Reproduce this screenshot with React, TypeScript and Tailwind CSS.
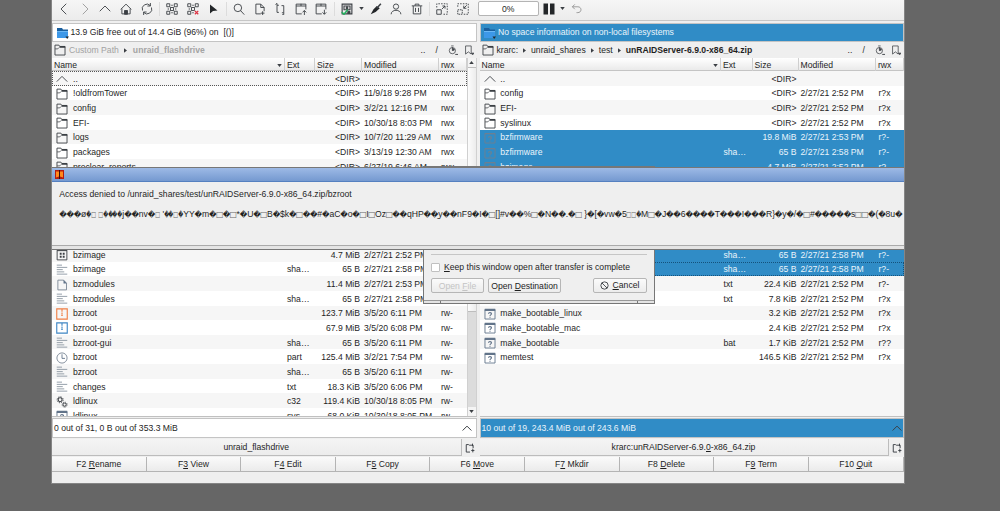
import React from "react"
import clsx from "clsx"

type Kind = "up" | "folder" | "unknown" | "exe" | "text" | "doc" | "zipOrange" | "zipBlue" | "clock" | "gears" | "none"

type Entry = {
  icon: Kind
  name: string
  ext?: string
  size?: string
  date?: string
  perm?: string
  selected?: boolean
  focused?: boolean
}

const blank: Entry = { icon: "none", name: "" }

const leftFiles: Entry[] = [
  { icon: "up", name: "..", size: "<DIR>", focused: true },
  { icon: "folder", name: "!oldfromTower", size: "<DIR>", date: "11/9/18 9:28 PM", perm: "rwx" },
  { icon: "folder", name: "config", size: "<DIR>", date: "3/2/21 12:16 PM", perm: "rwx" },
  { icon: "folder", name: "EFI-", size: "<DIR>", date: "10/30/18 8:03 PM", perm: "rwx" },
  { icon: "folder", name: "logs", size: "<DIR>", date: "10/7/20 11:29 AM", perm: "rwx" },
  { icon: "folder", name: "packages", size: "<DIR>", date: "3/13/19 12:30 AM", perm: "rwx" },
  { icon: "folder", name: "preclear_reports", size: "<DIR>", date: "6/27/19 6:46 AM", perm: "rwx" },
  blank,
  blank,
  blank,
  blank,
  blank,
  { icon: "exe", name: "bzimage", size: "4.7 MiB", date: "2/27/21 2:52 PM" },
  { icon: "text", name: "bzimage", ext: "sha…", size: "65 B", date: "2/27/21 2:58 PM" },
  { icon: "doc", name: "bzmodules", size: "11.4 MiB", date: "2/27/21 2:53 PM" },
  { icon: "text", name: "bzmodules", ext: "sha…", size: "65 B", date: "2/27/21 2:58 PM" },
  { icon: "zipOrange", name: "bzroot", size: "123.7 MiB", date: "3/5/20 6:11 PM", perm: "rw-" },
  { icon: "zipBlue", name: "bzroot-gui", size: "67.9 MiB", date: "3/5/20 6:08 PM", perm: "rw-" },
  { icon: "text", name: "bzroot-gui", ext: "sha…", size: "65 B", date: "3/5/20 6:11 PM", perm: "rw-" },
  { icon: "clock", name: "bzroot", ext: "part", size: "125.4 MiB", date: "3/2/21 7:54 PM", perm: "rw-" },
  { icon: "text", name: "bzroot", ext: "sha…", size: "65 B", date: "3/5/20 6:11 PM", perm: "rw-" },
  { icon: "text", name: "changes", ext: "txt", size: "18.3 KiB", date: "3/5/20 6:06 PM", perm: "rw-" },
  { icon: "gears", name: "ldlinux", ext: "c32", size: "119.4 KiB", date: "10/30/18 8:05 PM", perm: "rw-" },
  { icon: "unknown", name: "ldlinux", ext: "sys", size: "68.0 KiB", date: "10/30/18 8:05 PM", perm: "rw-" },
]

const rightFiles: Entry[] = [
  { icon: "up", name: "..", size: "<DIR>" },
  { icon: "folder", name: "config", size: "<DIR>", date: "2/27/21 2:52 PM", perm: "r?x" },
  { icon: "folder", name: "EFI-", size: "<DIR>", date: "2/27/21 2:52 PM", perm: "r?x" },
  { icon: "folder", name: "syslinux", size: "<DIR>", date: "2/27/21 2:52 PM", perm: "r?x" },
  { icon: "unknown", name: "bzfirmware", size: "19.8 MiB", date: "2/27/21 2:53 PM", perm: "r?-", selected: true },
  { icon: "unknown", name: "bzfirmware", ext: "sha…", size: "65 B", date: "2/27/21 2:58 PM", perm: "r?-", selected: true },
  { icon: "unknown", name: "bzimage", size: "4.7 MiB", date: "2/27/21 2:52 PM", perm: "r?-", selected: true },
  blank,
  blank,
  blank,
  blank,
  blank,
  { icon: "none", name: "", ext: "sha…", size: "65 B", date: "2/27/21 2:58 PM", perm: "r?-", selected: true },
  { icon: "none", name: "", ext: "sha…", size: "65 B", date: "2/27/21 2:58 PM", perm: "r?-", selected: true, focused: true },
  { icon: "none", name: "", ext: "txt", size: "22.4 KiB", date: "2/27/21 2:52 PM", perm: "r?-" },
  { icon: "none", name: "", ext: "txt", size: "7.8 KiB", date: "2/27/21 2:52 PM", perm: "r?x" },
  { icon: "unknown", name: "make_bootable_linux", size: "3.2 KiB", date: "2/27/21 2:52 PM", perm: "r?x" },
  { icon: "unknown", name: "make_bootable_mac", size: "2.4 KiB", date: "2/27/21 2:52 PM", perm: "r?x" },
  { icon: "unknown", name: "make_bootable", ext: "bat", size: "1.7 KiB", date: "2/27/21 2:52 PM", perm: "r??" },
  { icon: "unknown", name: "memtest", size: "146.5 KiB", date: "2/27/21 2:52 PM", perm: "r?x" },
]

function Svg({ children, className = "h-3 w-3" }: { children: React.ReactNode; className?: string }) {
  return (
    <svg viewBox="0 0 16 16" className={clsx("shrink-0", className)} fill="none" stroke="#3b3f44" strokeWidth="1.2">
      {children}
    </svg>
  )
}

function FileIcon({ kind, selected }: { kind: Kind; selected?: boolean }) {
  switch (kind) {
    case "up":
      return <Svg><path d="M1 11.500 8 4.500l7 7" /></Svg>
    case "folder":
      return (
        <Svg>
          <path d="M1.300 14.700V1.500h5.200l1.500 2h6.700v11.200z" />
          <path d="M7.500 3.800h7.500" strokeWidth="2.400" />
          <path d="M1.500 6.500h3.500l2-2" strokeWidth="1" />
        </Svg>
      )
    case "unknown":
      return (
        <Svg>
          <g stroke={selected ? "#70808f" : "#62748a"}>
            <path d="M1.300 2v12.700h13.400V2z" />
            <path d="M1 2.500h14" strokeWidth={selected ? 1.2 : 3} />
            <path d="M6 7.600c0-2 4-2 4 .2 0 1.500-2 1.300-2 2.800M8 11.700v1.300" strokeWidth="1.500" />
          </g>
        </Svg>
      )
    case "exe":
      return (
        <Svg>
          <path d="M1.500 1.500h13v13h-13z" />
          <path d="M1.500 2.200h13" />
          <path d="M5 5h2.500v2.500H5zM9 5h2.500v2.500H9zM5 9h2.500v2.500H5zM9 9h2.500v2.500H9z" fill="#3b3f44" stroke="none" />
        </Svg>
      )
    case "text":
      return (
        <Svg>
          <path d="M1 1.500h7M1 4.500h14M1 7.500h8M1 10.500h10M1 13.500h14" stroke="#8b96a2" />
        </Svg>
      )
    case "doc":
      return (
        <Svg>
          <path d="M2.500 1.500H10l4 4v9H2.500z" stroke="#7b8795" />
          <path d="M10 1v5h4.500z" fill="#62748a" stroke="none" />
        </Svg>
      )
    case "zipOrange":
      return <Svg><path d="M1 1.200h14v13.600H1zM8 2v3M8 6v3M7 10h2" stroke="#ef7f45" strokeWidth="1.500" /></Svg>
    case "zipBlue":
      return <Svg><path d="M1 1.200h14v13.600H1zM8 2v3M8 6v3M7 10h2" stroke="#3f86c4" strokeWidth="1.500" /></Svg>
    case "clock":
      return <Svg><circle cx="8" cy="8" r="6.800" stroke="#7b8795" /><path d="M8 3v5.500h4" stroke="#62748a" /></Svg>
    case "gears":
      return (
        <Svg>
          <circle cx="5.500" cy="5" r="2.600" strokeWidth="1.400" />
          <circle cx="5.500" cy="5" r="4" strokeWidth="1.300" strokeDasharray="1.600 1.540" />
          <circle cx="11.500" cy="11.500" r="2.100" strokeWidth="1.300" />
          <circle cx="11.500" cy="11.500" r="3.300" strokeDasharray="1.300 1.290" />
        </Svg>
      )
    default:
      return <span />
  }
}

function ListRow({ file, odd, right }: { file: Entry; odd: boolean; right?: boolean }) {
  return (
    <div
      className={clsx(
        "grid h-[14.67px] shrink-0 items-center whitespace-pre pl-1 pt-[2px]",
        right ? "grid-cols-[16.8px_223.2px_30px_43px_4px_78px_1fr]" : "grid-cols-[17px_214px_30px_43px_4px_77px_1fr]",
        file.selected ? "bg-[#308cc6] text-[#eaf4fb]" : odd ? "bg-white" : "bg-[#f6f6f6]",
        file.focused && (file.selected ? "outline-1 -outline-offset-1 outline-dotted outline-[#14527c]" : "outline-1 -outline-offset-1 outline-dotted outline-[#555]"),
      )}
    >
      <FileIcon kind={file.icon} selected={file.selected} />
      <span>{file.name}</span>
      <span>{file.ext}</span>
      <span className="text-right">{file.size}</span>
      <span />
      <span>{file.date}</span>
      <span>{file.perm}</span>
    </div>
  )
}

function Header({ right }: { right?: boolean }) {
  return (
    <div
      className={clsx(
        "grid h-[13px] items-center border-b border-[#c4c4c4] bg-gradient-to-b from-white to-[#eaeaea] *:h-full *:border-r *:border-[#cfcfcf] *:pl-[2px] *:leading-[14px]",
        right ? "grid-cols-[241.5px_31.500px_46px_77.500px_1fr]" : "grid-cols-[233px_30px_47px_77px_1fr]",
      )}
    >
      <span className="flex justify-between pr-[2px]">
        Name
        <Arrow />
      </span>
      <span>Ext</span>
      <span>Size</span>
      <span>Modified</span>
      <span>rwx</span>
    </div>
  )
}

function Arrow({ up }: { up?: boolean }) {
  return (
    <svg viewBox="0 0 6 4" className={clsx("h-[3px] w-[5px] shrink-0 self-center", up && "rotate-180")}>
      <path d="M0 0h6L3 4z" fill="#3b3f44" />
    </svg>
  )
}

function Tool({ children }: { children: React.ReactNode }) {
  return <button className="flex w-[20.6px] shrink-0 justify-center">{children}</button>
}

function Sep() {
  return <span className="flex w-[5px] shrink-0 justify-center"><i className="h-3.5 w-px bg-[#dcdcdc]" /></span>
}

function Toolbar() {
  return (
    <div className="flex h-[21px] items-center border-b border-[#c6c6c6] bg-gradient-to-b from-[#f6f6f6] to-[#ececec] pb-[3px] pl-[2px]">
      <Tool><Svg><path d="M11 1 4 8l7 7" /></Svg></Tool>
      <Tool><Svg><path d="m5 1 7 7-7 7" stroke="#999" /></Svg></Tool>
      <Tool><Svg><path d="m1 11 7-7 7 7" /></Svg></Tool>
      <Tool>
        <Svg><path d="m1 8.500 7-7 7 7M2.500 7.500v7h11v-7" /><path d="M6 15v-5h4v5z" fill="#3b3f44" /></Svg>
      </Tool>
      <Tool>
        <Svg><path d="M2 10A6.300 6.300 0 0 1 12.500 3.500M14 6A6.300 6.300 0 0 1 3.500 12.500M12.500 0v4h-4M3.500 16v-4h4" /></Svg>
      </Tool>
      <Sep />
      <Tool>
        <Svg>
          <path d="M1 1h4v4H1zM11 1h4v4h-4zM1 11h4v4H1zM11 11h4v4h-4zM6 6h4v4H6zM5 5l1 1m4 4 1 1M11 5l-1 1m-4 4-1 1M7 3h2M7 13h2M3 7v2M13 7v2" />
        </Svg>
      </Tool>
      <Tool>
        <Svg>
          <path d="M1 1h4v4H1zM11 1h4v4h-4zM1 11h4v4H1zM6 6h4v4H6zM5 5l1 1M11 5l-1 1m-4 4-1 1M7 3h2M7 13h2M3 7v2" />
          <path d="m10.500 10.500 4.500 4.500m0-4.500L10.500 15" stroke="#dc3545" strokeWidth="1.800" />
        </Svg>
      </Tool>
      <Tool><Svg><path d="M4 2v12l4-3.500 6-.500z" fill="#232629" stroke="none" /></Svg></Tool>
      <Sep />
      <Tool><Svg><circle cx="6.500" cy="6.500" r="5" /><path d="m10 10 5 5.500" /></Svg></Tool>
      <Tool><Svg><path d="M9 14.500H2.500v-13H9l4.500 4.500v5M9 1.500V6h4.500" /><path d="M9 13.500h5M11.500 11v5" /></Svg></Tool>
      <Tool><Svg><path d="M6.500 3H4v9.500h2.500M10 3.500h3V13h-2.500M4 .500V3M13 13v2.500M2 2l2-1.500M11 15.500h2" /></Svg></Tool>
      <Tool><Svg><path d="M9 14.500H1.500v-13h13v7M1.500 4h13M8 1v3M12.500 16v-6m-2.500 2.500 2.500-2.500 2.500 2.500" /></Svg></Tool>
      <Tool><Svg><path d="M9 14.500H1.500v-13h13v7M1.500 4h13M8 1v3M12.500 9v6M10 12.500l2.500 2.500 2.500-2.500" /></Svg></Tool>
      <Sep />
      <Tool>
        <Svg>
          <path d="M1.500 1.500h13v13h-13zM4 4h8v5H4z" strokeWidth="1.500" />
          <path d="M7 5h2v3H7zM9 11h3v3H9z" fill="#3b3f44" />
          <path d="m1 12 3 3 5-6" stroke="#27ae60" strokeWidth="2.200" />
        </Svg>
      </Tool>
      <span className="flex w-[8px] justify-center"><Arrow /></span>
      <Tool><Svg><path d="m1 15 3.500-6.500L9 4l4 3-5.500 5z" fill="#232629" stroke="none" /><path d="m9 7 5.500-6" strokeWidth="2" /></Svg></Tool>
      <Tool><Svg><circle cx="8" cy="4.800" r="3.500" /><path d="M1.500 15c0-7 13-7 13 0" /></Svg></Tool>
      <Tool><Svg><path d="M3 4v10.500h10V4M1 3.800h14M5.500 3.500v-2h5v2M6 6.500V12M10 6.500V12" /></Svg></Tool>
      <Sep />
      <Tool>
        <Svg><path d="M1 9h6v6H1z" /><path d="M1 6V1h14v14H10" strokeDasharray="2 1.600" /><path d="m8 8 4-4M8.500 4H12v3.500" /></Svg>
      </Tool>
      <Tool>
        <Svg><path d="M15 1v14H8M1 5V1h14" strokeDasharray="2 1.600" /><path d="M1 9h6v6H1z" strokeDasharray="2 1" /><path d="M13 3 9 7M9 3.500V7h3.500" /></Svg>
      </Tool>
      <div className="ml-[4.500px] h-[15px] w-[61px] shrink-0 rounded-[2px] border border-[#b4b4b4] bg-white text-center leading-[14px]">0%</div>
      <svg viewBox="0 0 12 12" className="ml-[4px] h-[12px] w-[12px]"><path d="M.500.500h4.500v11H.500zM7 .500h4.500v11H7z" fill="#232629" /></svg>
      <span className="flex w-[16px] justify-center"><Arrow /></span>
      <Svg className="h-[11px] w-[11px]"><path d="M2 5.500h8c6 0 6 8.500 0 8.500H8M5.500 2 2 5.500 5.500 9" stroke="#8a8a8a" /></Svg>
    </div>
  )
}

function DriveIcon() {
  return (
    <svg viewBox="0 0 12 12" className="h-[12px] w-[12px] shrink-0">
      <path d="M0 1h5l1 1.500h5V5H0z" fill="#1a5f9e" />
      <path d="M0 4h11v7H0z" fill="#3d98e8" />
      <path d="M0 4h11v1H0z" fill="#6cb8f5" />
      <path d="M8.500 9.500H12L10.200 12z" fill="#232629" />
    </svg>
  )
}

function PathTools() {
  return (
    <div className="ml-auto flex items-center">
      <span className="w-[15px]">..</span>
      <span className="w-[12px]">/</span>
      <Svg className="mr-[6px] h-[10px] w-[10px]"><circle cx="7" cy="9" r="5" /><path d="M7 9V4l3.500 4zM5 1.500h4M12 15h4l-2 2z" fill="#3b3f44" /></Svg>
      <Svg className="h-[10px] w-[10px]"><path d="M2.500 1.500h9v13L7 11l-4.500 3.500z" /><path d="M12 13h4l-2 2.500z" fill="#3b3f44" /></Svg>
    </div>
  )
}

function Crumb() {
  return <svg viewBox="0 0 4 6" className="h-[5px] w-[3px]"><path d="M0 0v6l4-3z" fill="#3b3f44" /></svg>
}

function Chevron() {
  return <Svg className="h-[10px] w-[10px]"><path d="m1 12 7-7 7 7" strokeWidth="1.600" /></Svg>
}

function NewTab() {
  return (
    <Svg className="ml-[3px] h-[10px] w-[10px]">
      <path d="M8 14.500H2v-12h3.500l1.500 1h6V8M12.500 9v6M10 12h5M12 1v4" strokeWidth="1.500" />
    </Svg>
  )
}

function Panel({ right }: { right?: boolean }) {
  const files = right ? rightFiles : leftFiles
  return (
    <section className={clsx("flex flex-col", right ? "w-[424px]" : "w-[424.5px]")}>
      <div
        className={clsx(
          "mt-[2px] flex h-[19px] items-center gap-[2px] border border-[#c4c4c4] pl-[3.500px]",
          right ? "bg-[#308cc6] text-[#eaf4fb]" : "bg-white",
        )}
      >
        <DriveIcon />
        <span className="whitespace-pre">{right ? "No space information on non-local filesystems" : "13.9 GiB free out of 14.4 GiB (96%) on  [()]"}</span>
      </div>
      <div className="flex h-[16px] items-center pl-[2px] pr-[3px]">
        <FileIcon kind="folder" />
        {right ? (
          <div className="ml-[3px] flex items-center gap-[5px]">
            krarc:<Crumb />unraid_shares<Crumb />test<Crumb /><b>unRAIDServer-6.9.0-x86_64.zip</b>
          </div>
        ) : (
          <div className="ml-[3px] flex items-center gap-[5.500px] text-[#a3a3a3]">
            Custom Path<Crumb /><b>unraid_flashdrive</b>
          </div>
        )}
        <PathTools />
      </div>
      <div className="flex h-[359px] border-b border-[#c0c0c0]">
        <div className="flex min-w-0 flex-1 flex-col overflow-hidden bg-[#f6f6f6]">
          <Header right={right} />
          {files.map((file, i) => (
            <ListRow key={i} file={file} odd={i % 2 === 1} right={right} />
          ))}
        </div>
        {!right && (
          <div className="flex w-[9.500px] flex-col border-x border-[#d0d0d0] bg-[#dcdcdc]">
            <div className="flex h-[9px] justify-center bg-[#f4f4f4]"><Arrow up /></div>
            <div className="h-[245px] border-y border-[#bdbdbd] bg-gradient-to-r from-[#fcfcfc] to-[#ececec]" />
            <div className="mt-auto flex h-[9px] justify-center bg-[#f4f4f4]"><Arrow /></div>
          </div>
        )}
      </div>
      <div
        className={clsx(
          "mt-px flex h-[20px] items-center justify-between border border-[#c4c4c4] pl-px",
          right ? "bg-[#308cc6] pr-px text-[#eaf4fb]" : "bg-white pr-[4px]",
        )}
      >
        {right ? "10 out of 19, 243.4 MiB out of 243.6 MiB" : "0 out of 31, 0 B out of 353.3 MiB"}
        <Chevron />
      </div>
      <div className="mt-px flex h-[17px] items-center">
        <div className="h-[17px] flex-1 border-b border-r border-[#bcbcbc] bg-gradient-to-b from-[#f4f4f4] to-[#ececec] text-center leading-[17px]">
          {right ? <>krarc:unRAIDServer-6.9.<u>0</u>-x86_64.zip</> : "unraid_flashdrive"}
        </div>
        <div className="w-[15px]"><NewTab /></div>
      </div>
    </section>
  )
}

const keys = [
  ["F2 ", "R", "ename"],
  ["F", "3", " View"],
  ["F", "4", " Edit"],
  ["F", "5", " Copy"],
  ["F6 ", "M", "ove"],
  ["F", "7", " Mkdir"],
  ["F8 ", "D", "elete"],
  ["F", "9", " Term"],
  ["F10 ", "Q", "uit"],
]

// "<" starts squeezed glyphs, ">" ends them
const garbage =
  "���ø<�□> <□����>j��nv�<□> '<��□�>YY�m�□�□*�U�□B�$k�□��#�aC�o�□I□Oz□��qHP��̬y��nF9�I�□[]#v��%□�N��.�□ }�[�vw�5<□□�>M□�J��6����T���I���R}�y�/�□#�����s□□�(�8u�"

function Garbage() {
  let narrow = false
  return (
    <p className="flex h-[11px] items-center whitespace-pre">
      {garbage.split(/([�□<>])/).map((part, i) => {
        if (part === "<" || part === ">") {
          narrow = part === "<"
          return null
        }
        if (part === "�" || part === "□") {
          return (
            <span
              key={i}
              className={clsx(
                "flex shrink-0 justify-center font-['DejaVu_Sans']",
                part === "�" ? "text-[7.4px]" : "text-[8px] text-[#666]",
                narrow ? "w-[4.8px]" : part === "�" ? "w-[7.27px]" : "w-[6.4px]",
              )}
            >
              <span className={clsx(narrow && "scale-x-[0.65]")}>{part}</span>
            </span>
          )
        }
        return <span key={i} className="shrink-0">{part}</span>
      })}
    </p>
  )
}

function ErrorDialog() {
  return (
    <div className="absolute left-0 top-[167px] z-20 h-[83px] w-[852px] overflow-hidden border-t border-[#777] bg-[#efefef]">
      <div className="flex h-[14px] items-center border-b border-[#5580c0] bg-gradient-to-b from-[#9dbae6] to-[#7599d0] pl-[3px]">
        <svg viewBox="0 0 9 9" className="h-[9px] w-[9px]">
          <path d="M0 0h9v9H0z" fill="#b51c10" />
          <path d="M1 1.500h3v5L1 7.500zM5 1.500h3v6L5 6.500z" fill="#ff8a1c" />
          <path d="M4 0h1v9H4z" fill="#3a0c0c" />
        </svg>
      </div>
      <div className="flex h-[64px] flex-col gap-[9.500px] border-b border-[#aaa] pl-[7.300px] pt-[6.500px]">
        <p className="h-[11px] leading-[11px]">Access denied to /unraid_shares/test/unRAIDServer-6.9.0-x86_64.zip/bzroot</p>
        <Garbage />
      </div>
      <div className="h-[4px] border-b border-[#777] bg-[#e4e4e4]" />
    </div>
  )
}

function TransferDialog() {
  return (
    <div className="absolute left-[371px] top-[166px] z-10 flex h-[138px] w-[231.500px] flex-col justify-end border border-[#777] bg-[#efefef]">
      <div className="mx-[7px] border-t border-[#c6c6c6] pt-[7px]">
        <label className="flex items-center gap-[4px]">
          <i className="h-[9px] w-[9px] rounded-[1px] border border-[#c0c0c0] bg-white" />
          <span><u>K</u>eep this window open after transfer is complete</span>
        </label>
        <div className="mt-[4.500px] flex *:h-[15.500px] *:rounded-[2px] *:border *:border-[#b6b6b6] *:bg-gradient-to-b *:from-[#fbfbfb] *:to-[#ececec] *:leading-[14px]">
          <button className="w-[53px] text-[#c4c4c4]">Open <u>F</u>ile</button>
          <button className="ml-[4px] w-[73px]">Open <u>D</u>estination</button>
          <button className="ml-auto flex w-[54px] items-center justify-center gap-[4px]">
            <Svg className="h-[9px] w-[9px]"><circle cx="8" cy="8" r="6.500" strokeWidth="1.600" /><path d="m3.500 3.500 9 9" strokeWidth="1.600" /></Svg>
            <span><u>C</u>ancel</span>
          </button>
        </div>
      </div>
      <div className="mt-[7px] flex h-[3px] shrink-0 justify-between border-t border-[#999] bg-[#e4e4e4] px-[16px]">
        <i className="h-[2px] w-px bg-[#777]" />
        <i className="h-[2px] w-px bg-[#777]" />
      </div>
    </div>
  )
}

export default function App() {
  return (
    <div className="h-[511px] w-[1000px] overflow-hidden bg-[#666666] font-['Liberation_Sans',Arial,sans-serif] text-[8.65px] leading-[11px] text-[#1f1f1f]">
      <main className="relative ml-[51px] flex h-[484px] w-[853.5px] flex-col border-b border-l border-r border-[#858585] bg-[#efefef]">
        <Toolbar />
        <div className="flex justify-between">
          <Panel />
          <Panel right />
        </div>
        <div className="mt-px grid h-[15px] grid-cols-9">
          {keys.map(([a, key, b]) => (
            <button key={a + key + b} className="whitespace-pre border-b border-r border-[#b4b4b4] bg-gradient-to-b from-[#fafafa] to-[#ebebeb] leading-[14px]">
              {a}<u>{key}</u>{b}
            </button>
          ))}
        </div>
        <TransferDialog />
        <ErrorDialog />
      </main>
    </div>
  )
}
